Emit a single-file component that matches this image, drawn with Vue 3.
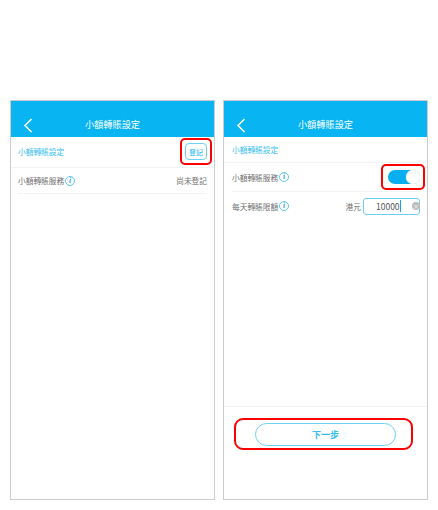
<script setup>
const title = '小額轉賬設定'
</script>

<template>
  <div class="page">
    <section class="phone">
      <header class="bar">
        <svg class="back" width="10" height="15" viewBox="0 0 10 15"><path d="M8.5 1 L2 7.5 L8.5 14" fill="none" stroke="#fff" stroke-width="1.5" /></svg>
        <span class="bar-title">{{ title }}</span>
      </header>
      <div class="row head-a">
        <span class="blue">{{ title }}</span>
        <span class="mark mark-reg"><button class="reg">登記</button></span>
      </div>
      <div class="row row-b">
        <span class="label">小額轉賬服務<i class="info">i</i></span>
        <span class="value">尚未登記</span>
      </div>
    </section>

    <section class="phone">
      <header class="bar">
        <svg class="back" width="10" height="15" viewBox="0 0 10 15"><path d="M8.5 1 L2 7.5 L8.5 14" fill="none" stroke="#fff" stroke-width="1.5" /></svg>
        <span class="bar-title">{{ title }}</span>
      </header>
      <div class="row head-b"><span class="blue">{{ title }}</span></div>
      <div class="row row-c">
        <span class="label">小額轉賬服務<i class="info">i</i></span>
        <span class="mark mark-toggle"><span class="toggle"><span class="knob"></span></span></span>
      </div>
      <div class="row row-d">
        <span class="label">每天轉賬限額<i class="info">i</i></span>
        <span class="amount">
          <span class="value">港元</span>
          <span class="input"><span class="num">10000</span><span class="caret"></span><span class="clear">×</span></span>
        </span>
      </div>
      <footer class="foot">
        <span class="mark mark-next"><button class="next">下一步</button></span>
      </footer>
    </section>
  </div>
</template>

<style>
html, body { margin: 0; background: #fff; }
</style>

<style scoped>
.page {
  display: flex;
  gap: 8px;
  width: 438px;
  height: 510px;
  box-sizing: border-box;
  padding: 100px 0 0 10px;
  font-family: "Noto Sans CJK TC", "Liberation Sans", sans-serif;
  font-size: 7.7px;
  color: #707070;
}
.phone {
  width: 205px;
  height: 400px;
  box-sizing: border-box;
  border: 1px solid #ccc;
  display: flex;
  flex-direction: column;
}
.bar {
  height: 36px;
  background: #08b4f2;
  position: relative;
  display: flex;
  align-items: flex-end;
  justify-content: center;
  padding-bottom: 6px;
  box-sizing: border-box;
}
.bar-title { color: #fff; font-size: 9.2px; line-height: 14px; }
.back { position: absolute; left: 12px; top: 17px; }
.row {
  margin: 0 7px;
  display: flex;
  align-items: center;
  justify-content: space-between;
  border-bottom: 1px solid #f3f3f3;
  box-sizing: border-box;
}
.head-a { height: 31px; margin: 0; padding: 0 7px 1px; }
.row-b { height: 26px; }
.head-b { height: 26px; margin: 0; padding: 0 7px 0 8px; }
.row-c { height: 29px; margin-left: 8px; }
.row-d { height: 28px; margin-left: 8px; border-bottom: 0; }
.blue { color: #35bdf0; }
.label { display: flex; align-items: center; gap: 1px; }
.info {
  width: 10px;
  height: 10px;
  box-sizing: border-box;
  border: 1px solid #5cc6f2;
  border-radius: 50%;
  color: #2aa5dd;
  font: italic 700 7.5px/8px "Liberation Serif", serif;
  text-align: center;
}
.mark { position: relative; display: block; }
.mark::after {
  content: "";
  position: absolute;
  border: 2px solid #f00;
  border-radius: 5px;
  box-sizing: border-box;
}
.mark-reg::after { left: -5px; right: -5px; top: -5px; bottom: -5px; }
.mark-toggle::after { left: -7px; right: -5px; top: -6px; bottom: -6px; }
.mark-next::after { left: -21px; right: -17px; top: -5px; bottom: -4px; border-radius: 9px; }
.reg {
  display: block;
  width: 22px;
  height: 17px;
  padding: 0;
  background: #fff;
  border: 1px solid #6fd0f5;
  border-radius: 4px;
  color: #35bdf0;
  font: inherit;
  font-size: 7px;
  font-weight: 500;
}
.toggle {
  display: block;
  width: 32px;
  height: 14px;
  background: #08aef0;
  border-radius: 7px;
  position: relative;
}
.knob {
  position: absolute;
  right: 0;
  top: 0;
  width: 14px;
  height: 14px;
  background: #fff;
  border-radius: 50%;
  box-shadow: 0 0 1px #bdeafa;
}
.amount { display: flex; align-items: center; gap: 2px; }
.input {
  width: 57px;
  height: 17px;
  box-sizing: border-box;
  border: 1px solid #6fd0f5;
  border-radius: 3px;
  display: flex;
  align-items: center;
  padding-left: 12px;
  color: #555;
  font-size: 8.5px;
  position: relative;
}
.caret { width: 1.5px; height: 12px; background: #1a9fe0; }
.clear {
  position: absolute;
  right: -1px;
  top: 3px;
  width: 8px;
  height: 8px;
  border-radius: 50%;
  background: #bbb;
  color: #fff;
  font-size: 7px;
  line-height: 8px;
  text-align: center;
}
.foot {
  margin-top: auto;
  height: 93px;
  border-top: 1px solid #f3f3f3;
  display: flex;
  justify-content: center;
  align-items: flex-start;
  padding-top: 16px;
  box-sizing: border-box;
}
.next {
  display: block;
  width: 141px;
  height: 23px;
  padding: 0;
  background: #fff;
  border: 1px solid #6fd0f5;
  border-radius: 12px;
  color: #35bdf0;
  font: inherit;
  font-weight: 700;
  font-size: 9px;
}
</style>
